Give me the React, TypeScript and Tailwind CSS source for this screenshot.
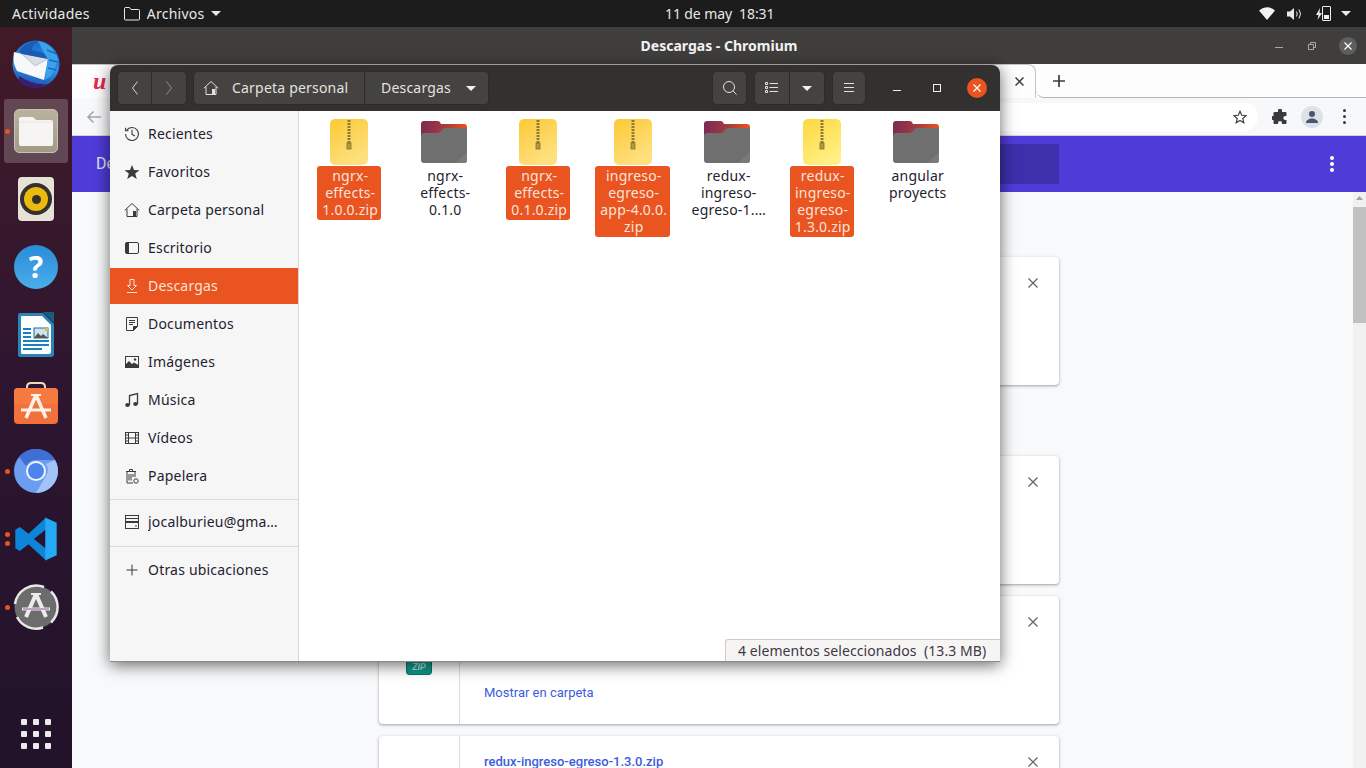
import type { FC, ReactNode } from 'react';

const Svg: FC<{ size?: number; className?: string; children: ReactNode }> = ({ size = 16, className, children }) => (
  <svg width={size} height={size} viewBox="0 0 16 16" fill="none" stroke="currentColor" strokeWidth="1" className={className}>
    {children}
  </svg>
);

const HomeIcon = () => (
  <Svg>
    <path d="M.8 8.3 8 1.5l7.2 6.8" />
    <path d="M3 6.8v7.7h10V6.8" />
    <rect x="9" y="9" width="3" height="5.5" fill="currentColor" stroke="none" />
  </Svg>
);
const RecentIcon = () => (
  <Svg>
    <path d="M2.6 4.4A6.5 6.5 0 1 1 1.5 8" strokeWidth="1.1" />
    <path d="M1.5 1.8v3h3" strokeWidth="1.1" />
    <path d="M8 3.8v4.6l3 1.6" strokeWidth="1.1" />
  </Svg>
);
const StarIcon = () => (
  <Svg>
    <polygon points="8,1 10,6 15.5,6.2 11.2,9.6 12.8,15 8,12 3.2,15 4.8,9.6 .5,6.2 6,6" fill="currentColor" stroke="none" />
  </Svg>
);
const DesktopIcon = () => (
  <Svg>
    <rect x="1.5" y="2.5" width="13" height="11" rx="1.5" />
    <path d="M2.5 2.5H5v11H2.5a1 1 0 0 1-1-1v-9a1 1 0 0 1 1-1z" fill="currentColor" stroke="none" />
  </Svg>
);
const DownloadIcon = () => (
  <Svg>
    <path d="M6 1.5h4v6h2.5L8 12 3.5 7.5H6z" />
    <path d="M3 14.5h10" />
  </Svg>
);
const DocumentIcon = () => (
  <Svg>
    <path d="M2.5 1.5h11v9l-4 4h-7z" />
    <path d="M13.5 10.5h-4v4" fill="currentColor" />
    <path d="M5 4.5h6M5 6.5h6M5 8.5h4" />
  </Svg>
);
const ImageIcon = () => (
  <Svg>
    <rect x="1.5" y="2.5" width="13" height="11" />
    <path d="M1.5 13.5v-3l3.500-3.500 3 3 2-1.500 5 3v2z" fill="currentColor" stroke="none" />
    <circle cx="11" cy="5.500" r="1.200" fill="currentColor" stroke="none" />
  </Svg>
);
const MusicIcon = () => (
  <Svg>
    <path d="M5.500 13V3.500l8-2V12" strokeWidth="1.300" />
    <ellipse cx="3.500" cy="13" rx="2.300" ry="1.900" fill="currentColor" stroke="none" />
    <ellipse cx="11.500" cy="12" rx="2.300" ry="1.900" fill="currentColor" stroke="none" />
  </Svg>
);
const VideoIcon = () => (
  <Svg>
    <rect x="1.500" y="2.500" width="13" height="11" />
    <path d="M4.500 2.500v11M11.500 2.500v11M4.500 8h7M1.500 5h3M1.500 8h3M1.500 11h3M11.500 5h3M11.500 8h3M11.500 11h3" />
  </Svg>
);
const TrashIcon = () => (
  <Svg>
    <path d="M2 3.500h10M5.500 3.500v-2h3v2" />
    <path d="M3 3.500v11.500h6M11 3.500V9M5 6v6.500M7 6v6.500M9 6v3" />
    <circle cx="12" cy="13" r="2.200" />
  </Svg>
);
const ServerIcon = () => (
  <Svg>
    <rect x="1.500" y="1.500" width="13" height="6" />
    <rect x="1.500" y="8.500" width="13" height="6" />
    <path d="M1.500 4.500h13" />
    <path d="M11 12h2" />
  </Svg>
);
const PlusIcon = () => (
  <Svg>
    <path d="M8 2.500v11M2.500 8h11" />
  </Svg>
);

const Caret: FC<{ className?: string }> = ({ className }) => (
  <svg width="10" height="5" viewBox="0 0 10 5" className={className}>
    <path d="M0 0h10L5 5z" fill="currentColor" />
  </svg>
);

const places = [
  { label: 'Recientes', icon: <RecentIcon /> },
  { label: 'Favoritos', icon: <StarIcon /> },
  { label: 'Carpeta personal', icon: <HomeIcon /> },
  { label: 'Escritorio', icon: <DesktopIcon /> },
  { label: 'Descargas', icon: <DownloadIcon />, active: true },
  { label: 'Documentos', icon: <DocumentIcon /> },
  { label: 'Imágenes', icon: <ImageIcon /> },
  { label: 'Música', icon: <MusicIcon /> },
  { label: 'Vídeos', icon: <VideoIcon /> },
  { label: 'Papelera', icon: <TrashIcon /> },
];

const files = [
  { lines: ['ngrx-', 'effects-', '1.0.0.zip'], zip: true },
  { lines: ['ngrx-', 'effects-', '0.1.0'] },
  { lines: ['ngrx-', 'effects-', '0.1.0.zip'], zip: true },
  { lines: ['ingreso-', 'egreso-', 'app-4.0.0.', 'zip'], zip: true },
  { lines: ['redux-', 'ingreso-', 'egreso-1.…'] },
  { lines: ['redux-', 'ingreso-', 'egreso-', '1.3.0.zip'], zip: true, bright: true },
  { lines: ['angular', 'proyects'] },
];

const PlaceRow: FC<{ label: string; icon: ReactNode; active?: boolean }> = ({ label, icon, active }) => (
  <div className={`h-[36px] flex items-center pl-[14px] shrink-0 ${active ? 'bg-[#e95420] text-[#fbe3d9]' : 'text-[#1f2230]'}`}>
    <span className={`w-[24px] shrink-0 ${active ? 'text-[#fbe3d9]' : 'text-[#3a3a3a]'}`}>{icon}</span>
    <span className="truncate pb-[2px]">{label}</span>
  </div>
);

const ZipFile: FC<{ bright?: boolean }> = ({ bright }) => (
  <svg width="38" height="46" viewBox="0 0 38 46">
    <defs>
      <linearGradient id={bright ? 'zipB' : 'zipA'} x1="0" y1="0" x2="0.5" y2="1">
        <stop offset="0" stopColor={bright ? '#fdd73f' : '#fcc934'} />
        <stop offset="1" stopColor={bright ? '#fff083' : '#fee07f'} />
      </linearGradient>
    </defs>
    <rect width="38" height="46" rx="5" fill={`url(#${bright ? 'zipB' : 'zipA'})`} />
    <path d="M19 1v23" stroke="#8c7a3a" strokeWidth="3" strokeDasharray="2 1" />
    <rect x="17" y="24" width="4" height="6" fill="#b59a3e" stroke="#7f6f38" strokeWidth="0.800" />
  </svg>
);

const FolderFile: FC<{ id: string }> = ({ id }) => (
  <svg width="46" height="42" viewBox="0 0 46 42">
    <defs>
      <linearGradient id={id} x1="0" y1="0" x2="1" y2="0">
        <stop offset="0" stopColor="#7c2a55" />
        <stop offset="0.500" stopColor="#a43a3f" />
        <stop offset="1" stopColor="#e95420" />
      </linearGradient>
    </defs>
    <path d="M3 0h14q2 0 3 3h23q3 0 3 3v10H0V3q0-3 3-3z" fill={`url(#${id})`} />
    <path d="M3 12h14q2 0 4-3q1-2 3-2h19q3 0 3 3v29q0 3-3 3H3q-3 0-3-3V15q0-3 3-3z" fill="#6f6f6f" />
    <path d="M46 31v8q0 3-3 3H34z" fill="#7a7a7a" />
  </svg>
);

const FileItem: FC<{ lines: string[]; zip?: boolean; bright?: boolean; index: number }> = ({ lines, zip, bright, index }) => (
  <div className="flex flex-col items-center">
    <div className="h-[46px] flex items-center justify-center">{zip ? <ZipFile bright={bright} /> : <FolderFile id={`folder${index}`} />}</div>
    <div className={`mt-[1px] pt-[1px] pb-[2px] text-center leading-[17px] rounded-[3px] ${zip ? 'bg-[#e95420] text-[#fbe3d9] pl-[5px] pr-[3px] min-w-[64px]' : 'text-[#1f2230] pl-[3px]'}`}>
      {lines.map((line) => (
        <div key={line}>{line}</div>
      ))}
    </div>
  </div>
);

const HeaderButton: FC<{ className?: string; children: ReactNode }> = ({ className, children }) => (
  <div className={`h-[34px] bg-[#454341] rounded-[5px] border border-[#2e2c2b] flex items-center justify-center ${className ?? ''}`}>{children}</div>
);

const FilesWindow = () => (
  <div className="absolute left-[110px] top-[65px] w-[890px] h-[597px] flex flex-col rounded-t-[8px] border-b border-[#8a8a8a] shadow-[0_3px_16px_rgba(0,0,0,0.6)] text-[14px] tracking-[0.2px] overflow-hidden">
    <div className="h-[46px] shrink-0 bg-[#333130] flex items-center pl-[7px] text-[#e4e2df]">
      <div className="flex">
        <HeaderButton className="w-[35px] rounded-r-none">
          <svg width="10" height="16" viewBox="0 0 10 16" fill="none" stroke="#d8d6d3" strokeWidth="1"><path d="M7.500 1.500 2.500 8l5 6.500" /></svg>
        </HeaderButton>
        <HeaderButton className="w-[35px] rounded-l-none border-l-0">
          <svg width="10" height="16" viewBox="0 0 10 16" fill="none" stroke="#908e8c" strokeWidth="1"><path d="M2.500 1.500 7.500 8l-5 6.500" /></svg>
        </HeaderButton>
      </div>
      <div className="flex ml-[6px]">
        <HeaderButton className="w-[172px] rounded-r-none !justify-start pl-[9px] border-r-[#2e2c2b]">
          <HomeIcon />
          <span className="ml-[13px] pb-[2px]">Carpeta personal</span>
        </HeaderButton>
        <HeaderButton className="w-[124px] rounded-l-none border-l-0 !justify-start pl-[16px]">
          <span className="pb-[2px]">Descargas</span>
          <Caret className="ml-auto mr-[12px] text-[#f0f0f0]" />
        </HeaderButton>
      </div>
      <HeaderButton className="w-[35px] ml-auto">
        <svg width="16" height="16" viewBox="0 0 16 16" fill="none" stroke="#e4e2df" strokeWidth="1"><circle cx="7" cy="7" r="5.500" /><path d="m11 11 3.500 3.500" /></svg>
      </HeaderButton>
      <div className="flex ml-[7px]">
        <HeaderButton className="w-[36px] rounded-r-none">
          <svg width="14" height="12" viewBox="0 0 14 12" fill="none" stroke="#e4e2df" strokeWidth="1"><path d="M.5.500h2v2h-2zM.5 4.500h2v2h-2zM.5 8.500h2v2h-2zM4.500 1.500H13M4.500 5.500H13M4.500 9.500H13" /></svg>
        </HeaderButton>
        <HeaderButton className="w-[35px] rounded-l-none border-l-0">
          <Caret className="text-[#f0f0f0]" />
        </HeaderButton>
      </div>
      <HeaderButton className="w-[34px] ml-[7px]">
        <svg width="12" height="10" viewBox="0 0 12 10" fill="none" stroke="#e4e2df" strokeWidth="1"><path d="M1 .500h10M1 4.500h10M1 8.500h10" /></svg>
      </HeaderButton>
      <div className="flex ml-[11px] mr-[3px]">
        <div className="w-[40px] h-[34px] flex items-center justify-center">
          <div className="w-[8px] h-[1px] bg-[#f0f0f0] mt-[5px]" />
        </div>
        <div className="w-[40px] h-[34px] flex items-center justify-center">
          <div className="w-[8px] h-[8px] border border-[#f0f0f0]" />
        </div>
        <div className="w-[40px] h-[34px] flex items-center justify-center">
          <div className="w-[20px] h-[20px] rounded-full bg-[#e95420] flex items-center justify-center">
            <svg width="10" height="10" viewBox="0 0 10 10" stroke="#fff" strokeWidth="1.200"><path d="m1.500 1.500 7 7M8.500 1.500l-7 7" /></svg>
          </div>
        </div>
      </div>
    </div>
    <div className="flex-1 flex min-h-0">
      <aside className="w-[189px] shrink-0 bg-[#f6f6f6] border-r border-[#d8d6d3] pt-[5px] flex flex-col gap-[2px]">
        {places.map((place) => (
          <PlaceRow key={place.label} {...place} />
        ))}
        <div className="h-px bg-[#dcdcdc] mt-[3px]" />
        <div className="mt-[2px]">
          <PlaceRow label="jocalburieu@gma…" icon={<ServerIcon />} />
        </div>
        <div className="h-px bg-[#dcdcdc] mt-[4px]" />
        <div className="mt-[3px]">
          <PlaceRow label="Otras ubicaciones" icon={<PlusIcon />} />
        </div>
      </aside>
      <main className="flex-1 bg-white relative pt-[8px] pl-[3px]">
        <div className="grid grid-cols-[repeat(7,94.5px)] items-start">
          {files.map((file, i) => (
            <FileItem key={file.lines.join('')} index={i} {...file} />
          ))}
        </div>
        <div className="absolute right-0 bottom-0 w-[275px] h-[22px] bg-[#f6f5f4] border-t border-l border-[#cfcbc6] rounded-tl-[3px] pl-[12px] flex items-center text-[#3d3846] tracking-[0.08px] whitespace-pre">
          4 elementos seleccionados  (13.3 MB)
        </div>
      </main>
    </div>
  </div>
);

const ThunderbirdIcon = () => (
  <svg width="50" height="50" viewBox="0 0 50 50">
    <defs>
      <linearGradient id="tb" x1="0.700" y1="0" x2="0.500" y2="1">
        <stop offset="0" stopColor="#1c68c9" />
        <stop offset="0.600" stopColor="#2f8fe6" />
        <stop offset="1" stopColor="#1a4fae" />
      </linearGradient>
    </defs>
    <circle cx="25" cy="26" r="23.500" fill="url(#tb)" />
    <path d="M8 44A23.500 23.500 0 0 0 36 46Q24 48 8 38z" fill="#3b1d73" />
    <path d="M11 16 37 21 33 42 6 33Q1 24 3 14z" fill="#f6f8fb" />
    <path d="M11 16 24 28 37 21" fill="#d8dde6" stroke="#9aa6b8" strokeWidth="0.600" />
    <path d="M8 13Q14 4 27 3 20 8 21 12L33 15 37 21 11 16z" fill="#1a5bb5" />
    <path d="M27 3Q43 6 47 22 44 30 40 38L34 42 37 21 33 15z" fill="#3aa4ea" />
    <path d="M36 12 46 16M38 22 47 24M37 30 45 32" stroke="#1c68c9" strokeWidth="1.500" />
  </svg>
);

const FilesIcon = () => (
  <div className="w-[44px] h-[44px] rounded-[5px] bg-gradient-to-b from-[#b8b29f] to-[#a19b86] border border-[#c8c3b4] flex items-center justify-center">
    <svg width="34" height="30" viewBox="0 0 34 30">
      <path d="M2 1h11q2 0 3 2 .5 1 2 1h14q2 0 2 2v22q0 2-2 2H2q-2 0-2-2V3q0-2 2-2z" fill="#f7f5f3" />
      <path d="M0 6h34" stroke="#e4e1db" strokeWidth="0.800" />
    </svg>
  </div>
);

const RhythmboxIcon = () => (
  <div className="w-[36px] h-[44px] rounded-[4px] bg-[#e6e2d6] flex items-center justify-center">
    <div className="w-[32px] h-[32px] rounded-full bg-[#35322e] flex items-center justify-center">
      <div className="w-[24px] h-[24px] rounded-full bg-[#ecb90f] flex items-center justify-center">
        <div className="w-[9px] h-[9px] rounded-full bg-[#33312d]" />
      </div>
    </div>
  </div>
);

const HelpIcon = () => (
  <div className="w-[44px] h-[44px] rounded-full bg-gradient-to-b from-[#2a8bd8] to-[#4aaeea] flex items-center justify-center text-white text-[30px] font-bold leading-none">?</div>
);

const WriterIcon = () => (
  <svg width="38" height="46" viewBox="0 0 38 46">
    <path d="M3 1h23l11 11v30q0 3-3 3H3q-2 0-2-3V4q0-3 2-3z" fill="#2a86b8" />
    <path d="M5 4h20l9 9v27q0 2-2 2H5q-1 0-1-2V5q0-1 1-1z" fill="#fbfdfe" />
    <path d="M26 0h11v11z" fill="#1c5a80" />
    <path d="M6 17h8M6 21h8M6 25h8M6 29h26M6 33h26M6 37h19" stroke="#1b80bd" strokeWidth="2" />
    <rect x="17" y="16" width="14" height="10" fill="#cfe3f0" stroke="#1b6f9f" />
    <path d="M17 26l4-5 3 3 2-2 5 4z" fill="#555" />
    <rect x="28" y="16" width="3" height="3" fill="#f2b233" />
  </svg>
);

const SoftwareIcon = () => (
  <svg width="46" height="42" viewBox="0 0 46 42">
    <path d="M14 7V5q0-4 4-4h10q4 0 4 4v2" fill="none" stroke="#f4d9b8" strokeWidth="2" />
    <rect x="1" y="6" width="44" height="36" rx="4" fill="#f2703a" />
    <rect x="1" y="6" width="44" height="16" rx="4" fill="#f6793f" />
    <path d="M23 13 13 36M23 13l10 23" stroke="#fdf1ea" strokeWidth="3.500" fill="none" />
    <path d="M8 28h30" stroke="#fdf1ea" strokeWidth="3" />
    <path d="M18 13h10" stroke="#fdf1ea" strokeWidth="2" />
  </svg>
);

const ChromiumIcon = () => (
  <svg width="44" height="44" viewBox="0 0 44 44">
    <circle cx="22" cy="22" r="22" fill="#6b9ef0" />
    <path d="M22 0a22 22 0 0 1 19 11H22a11 11 0 0 0-10 6L5 7.800A22 22 0 0 1 22 0z" fill="#3e6fd4" />
    <path d="M41 11a22 22 0 0 1-19 33l9.500-16.500A11 11 0 0 0 32 15z" fill="#a3c2f8" />
    <circle cx="22" cy="22" r="10" fill="#f2f6fd" />
    <circle cx="22" cy="22" r="8" fill="#4a84ec" />
  </svg>
);

const VsCodeIcon = () => (
  <svg width="44" height="44" viewBox="0 0 100 100">
    <path fillRule="evenodd" d="M73 1 33 38 13 23 3 29v42l10 6 20-15 40 37V72L45 50l28-22z" fill="#0d86da" />
    <path d="M71 1 97 13v74L71 99z" fill="#25a8f5" />
  </svg>
);

const UpdateIcon = () => (
  <svg width="46" height="46" viewBox="0 0 46 46">
    <circle cx="23" cy="23" r="21.500" fill="#6c6c6c" />
    <path d="M38 7.500A21.500 21.500 0 0 1 38 38.500M30 43.500A21.500 21.500 0 0 1 4 33M2 20A21.500 21.500 0 0 1 31 3" fill="none" stroke="#e8e8e8" strokeWidth="2.500" />
    <path d="M23 10 13 33M23 10l10 23" stroke="#ececec" strokeWidth="4" fill="none" />
    <path d="M9 25h28" stroke="#ececec" strokeWidth="3" />
    <path d="M10 25h26" stroke="#7c3a80" strokeWidth="0.800" />
    <path d="M18 10h10" stroke="#ececec" strokeWidth="2" />
  </svg>
);

const dock = [
  { id: 'thunderbird', icon: <ThunderbirdIcon /> },
  { id: 'files', icon: <FilesIcon />, active: true, dots: 1 },
  { id: 'rhythmbox', icon: <RhythmboxIcon /> },
  { id: 'help', icon: <HelpIcon /> },
  { id: 'writer', icon: <WriterIcon /> },
  { id: 'software', icon: <SoftwareIcon /> },
  { id: 'chromium', icon: <ChromiumIcon />, dots: 1 },
  { id: 'vscode', icon: <VsCodeIcon />, dots: 2 },
  { id: 'update', icon: <UpdateIcon />, dots: 1 },
];

const Dock = () => (
  <nav className="w-[72px] shrink-0 flex flex-col pt-[2px] bg-gradient-to-b from-[#421a27] via-[#2d1530] to-[#21122a]">
    {dock.map((item) => (
      <div key={item.id} className="relative h-[68px] flex items-center justify-center">
        <div className={`w-[64px] h-[64px] rounded-[3px] flex items-center justify-center ${item.active ? 'bg-white/20' : ''}`}>{item.icon}</div>
        {!!item.dots && (
          <div className="absolute left-[4.5px] top-0 bottom-0 flex flex-col justify-center gap-[4px]">
            {Array.from({ length: item.dots }).map((_, i) => (
              <div key={i} className="w-[5px] h-[5px] rounded-full bg-[#e95420]" />
            ))}
          </div>
        )}
      </div>
    ))}
    <div className="mt-auto h-[68px] flex items-center justify-center">
      <div className="grid grid-cols-3 gap-[6px]">
        {Array.from({ length: 9 }).map((_, i) => (
          <div key={i} className="w-[6px] h-[6px] rounded-[1px] bg-[#eaeaea]" />
        ))}
      </div>
    </div>
  </nav>
);

const CloseX = () => (
  <svg width="10" height="10" viewBox="0 0 10 10" stroke="#5f6368" strokeWidth="1.200" className="shrink-0">
    <path d="m.5.500 9 9M9.500.500l-9 9" />
  </svg>
);

const DownloadCard: FC<{ className?: string; name?: string; showFolder?: boolean; zip?: boolean }> = ({ className, name, showFolder, zip }) => (
  <article className={`h-[128px] shrink-0 bg-white rounded-[4px] shadow-[0_1px_2px_rgba(60,64,67,0.3),0_1px_3px_1px_rgba(60,64,67,0.15)] flex ${className ?? ''}`}>
    <div className="w-[81px] shrink-0 border-r border-[#dadce0] flex justify-center pt-[36px]">
      {zip && (
        <div className="w-[26px] h-[43px] rounded-[3px] bg-gradient-to-b from-[#1fb5a3] to-[#0f9385] border border-[#0c7267] flex items-end justify-center text-[9px] font-bold italic text-[#a6e2d9]">ZIP</div>
      )}
    </div>
    <div className="flex-1 relative pl-[24px] text-[13px] text-[#3b5ce0]">
      {name && <div className="absolute left-[24px] top-[16px] font-medium leading-[20px]">{name}</div>}
      {showFolder && <div className="absolute left-[24px] top-[87px] leading-[20px]">Mostrar en carpeta</div>}
    </div>
    <div className="w-[52px] shrink-0 pt-[21px] pl-[21px]">
      <CloseX />
    </div>
  </article>
);

const ChromiumWindow = () => (
  <section className="flex-1 flex flex-col min-w-0 font-['Roboto',sans-serif]">
    <div className="h-[37px] shrink-0 bg-[#3f3e3c] flex items-center relative text-[#f2f2f2] text-[14px] font-bold font-['Noto_Sans',sans-serif]">
      <div className="flex-1 text-center">Descargas - Chromium</div>
      <div className="absolute right-0 top-0 bottom-0 flex items-center">
        <div className="w-[8px] h-px bg-[#a8a8a6] mr-[25px] mt-[4px]" />
        <svg width="8" height="8" viewBox="0 0 8 8" fill="none" stroke="#a8a8a6" strokeWidth="1" className="mr-[23px]">
          <path d="M.5 2.500h5v5h-5zM2.500 2V.500h5v5H6" />
        </svg>
        <div className="w-[18px] h-[18px] rounded-full bg-[#5e5e5e] flex items-center justify-center mr-[9px]">
          <svg width="8" height="8" viewBox="0 0 8 8" stroke="#fff" strokeWidth="1.200"><path d="m.5.500 7 7M7.500.500l-7 7" /></svg>
        </div>
      </div>
    </div>
    <div className="h-[34px] shrink-0 bg-[#fdfdfd] flex">
      <div className="w-[964px] shrink-0 border-r border-t border-[#c4c4c4] rounded-tr-[8px] flex items-center justify-between pl-[21px] pr-[11px]">
        <span className="font-['Liberation_Serif',serif] italic font-bold text-[24px] leading-none text-[#e8274f] -mt-[2px]">u</span>
        <svg width="9" height="9" viewBox="0 0 9 9" stroke="#3c3c3c" strokeWidth="1.500"><path d="m.5.500 8 8M8.500.500l-8 8" /></svg>
      </div>
      <div className="flex-1 border-b border-[#b4b4b4] rounded-bl-[8px] flex items-center pl-[17px]">
        <svg width="12" height="12" viewBox="0 0 12 12" stroke="#3c3c3c" strokeWidth="1.700"><path d="M6 0v12M0 6h12" /></svg>
      </div>
    </div>
    <div className="h-[38px] shrink-0 bg-[#f7f8fa] border-b border-[#d4d4d6] flex items-center pl-[14px] pr-[20px]">
      <svg width="16" height="14" viewBox="0 0 16 14" fill="none" stroke="#a4a6a8" strokeWidth="1.600"><path d="M15 7H2M7.500 1.500 2 7l5.500 5.500" /></svg>
      <div className="flex-1 h-[28px] ml-[6px] bg-white rounded-full flex items-center justify-end pr-[11px]">
        <svg width="14" height="14" viewBox="0 0 16 16" fill="none" stroke="#3f3f3f" strokeWidth="1.400"><polygon points="8,1.500 10,6 15,6.500 11.200,9.700 12.300,14.500 8,12 3.700,14.500 4.800,9.700 1,6.500 6,6" /></svg>
      </div>
      <svg width="16" height="16" viewBox="0 0 16 16" className="ml-[14px]">
        <path d="M6 1.500a2 2 0 0 1 4 0V3h3.500a1 1 0 0 1 1 1v3h-1.200a2 2 0 0 0 0 4h1.200v3a1 1 0 0 1-1 1H10v-1a2 2 0 0 0-4 0v1H2.500a1 1 0 0 1-1-1v-3H1a2 2 0 0 1 0-4h.5V4a1 1 0 0 1 1-1H6z" fill="#3a3a3c" />
      </svg>
      <div className="w-[22px] h-[22px] rounded-full bg-[#dee1e6] ml-[13px] flex items-center justify-center">
        <svg width="14" height="14" viewBox="0 0 14 14" fill="#4a5576"><circle cx="7" cy="4" r="3" /><path d="M1 13c0-3 3-4.500 6-4.500s6 1.500 6 4.500z" /></svg>
      </div>
      <div className="ml-[20px] flex flex-col gap-[3px]">
        <div className="w-[3px] h-[3px] rounded-full bg-[#3a3a3c]" />
        <div className="w-[3px] h-[3px] rounded-full bg-[#3a3a3c]" />
        <div className="w-[3px] h-[3px] rounded-full bg-[#3a3a3c]" />
      </div>
    </div>
    <div className="h-[56px] shrink-0 bg-[#4f3bd8] flex items-center pl-[24px] pr-[32px] text-white/85 text-[16px]">
      <span className="w-[283px] shrink-0">De</span>
      <div className="w-[680px] h-[40px] bg-[#3e2fab] rounded-[2px] shrink-0" />
      <div className="ml-auto flex flex-col gap-[2px]">
        <div className="w-[4px] h-[4px] rounded-full bg-white" />
        <div className="w-[4px] h-[4px] rounded-full bg-white" />
        <div className="w-[4px] h-[4px] rounded-full bg-white" />
      </div>
    </div>
    <div className="flex-1 flex min-h-0 bg-[#f8f9fa]">
      <div className="flex-1 pl-[307px] pr-[294px] pt-[65px] flex flex-col overflow-hidden">
        <DownloadCard />
        <DownloadCard className="mt-[71px]" />
        <DownloadCard className="mt-[12px]" showFolder zip />
        <DownloadCard className="mt-[12px]" name="redux-ingreso-egreso-1.3.0.zip" />
      </div>
      <div className="w-[13px] shrink-0 bg-[#f1f1f1] flex flex-col items-center pt-[4px]">
        <svg width="7" height="4" viewBox="0 0 7 4"><path d="M0 4 3.500 0 7 4z" fill="#a3a3a3" /></svg>
        <div className="w-full h-[116px] bg-[#c1c1c1] mt-[7px]" />
      </div>
    </div>
  </section>
);

const TopBar = () => (
  <header className="h-[27px] shrink-0 bg-[#1c1c1c] text-[#e8e8e8] text-[14px] flex items-center relative">
    <span className="ml-[12px] tracking-[0.27px]">Actividades</span>
    <svg width="16" height="14" viewBox="0 0 16 14" fill="none" stroke="#e8e8e8" strokeWidth="1" className="ml-[34px]">
      <path d="M1.500.5h4l1.500 2h7.500a1 1 0 0 1 1 1v8.500a1 1 0 0 1-1 1h-13a1 1 0 0 1-1-1V1.500a1 1 0 0 1 1-1z" />
    </svg>
    <span className="ml-[7px] tracking-[0.27px]">Archivos</span>
    <Caret className="ml-[6px]" />
    <span className="absolute left-[665px] whitespace-pre tracking-[-0.1px]">11 de may  18:31</span>
    <div className="ml-auto flex items-center mr-[15px]">
      <svg width="16" height="13" viewBox="0 0 16 13"><path d="M0 3.500Q8-3 16 3.500L8 13z" fill="#f2f2f2" /></svg>
      <svg width="16" height="14" viewBox="0 0 16 14" className="ml-[12px]" fill="none" stroke="#e8e8e8">
        <path d="M0 4.500h3L7 1v12L3 9.500H0z" fill="#e8e8e8" stroke="none" />
        <path d="M9.500 4.500q1.500 2.500 0 5M12 2.500q3 4.500 0 9" strokeWidth="1" />
      </svg>
      <svg width="6" height="12" viewBox="0 0 6 12" className="ml-[13px]"><path d="M4 0 0 7h2.500L1.500 12 6 5H3.500z" fill="#e8e8e8" /></svg>
      <div className="w-[9px] h-[15px] border border-[#f0f0f0] rounded-[1px] flex items-end p-[1px]">
        <div className="w-full h-[4px] bg-[#f0f0f0]" />
      </div>
      <Caret className="ml-[10px]" />
    </div>
  </header>
);

export default function App() {
  return (
    <div className="relative w-[1366px] h-[768px] overflow-hidden flex flex-col font-['Noto_Sans',sans-serif]">
      <TopBar />
      <div className="flex-1 flex min-h-0">
        <Dock />
        <ChromiumWindow />
      </div>
      <FilesWindow />
    </div>
  );
}
